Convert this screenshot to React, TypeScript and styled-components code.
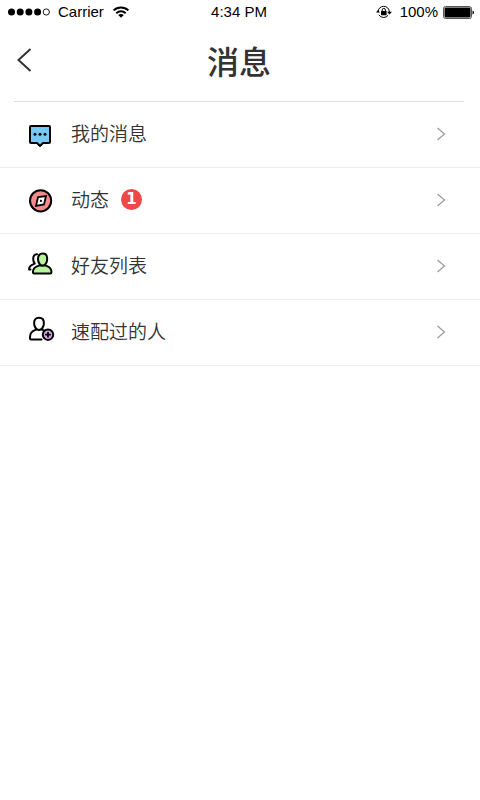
import React from "react";
import styled, { createGlobalStyle } from "styled-components";

const GlobalStyle = createGlobalStyle`
  * { box-sizing: border-box; }
  body {
    margin: 0;
    background: #fff;
    color: #333;
    font-family: "Noto Sans CJK SC", sans-serif;
  }
`;

const Page = styled.div`
  min-height: 100vh;
  background: #fff;
`;

const StatusBar = styled.div`
  display: grid;
  grid-template-columns: 1fr auto 1fr;
  align-items: center;
  height: 24px;
  padding: 0 6px 0 8px;
  color: #000;
  font: 15px/24px "Liberation Sans", Arial, sans-serif;
`;

const StatusGroup = styled.div<{ $end?: boolean }>`
  display: flex;
  align-items: center;
  gap: 8px;
  justify-content: ${(p) => (p.$end ? "flex-end" : "flex-start")};
`;

const Clock = styled.time`
  padding-right: 4px;
`;

const Power = styled.span`
  display: flex;
  align-items: center;
  gap: 5px;
`;

const Header = styled.header`
  display: grid;
  grid-template-columns: 48px 1fr 48px;
  align-items: center;
  height: 78px;
  margin: 0 16px 0 14px;
  padding-bottom: 5px;
  border-bottom: 1px solid #dcdcdc;
`;

const BackButton = styled.button`
  display: flex;
  align-items: center;
  height: 48px;
  padding: 0 0 0 2px;
  border: 0;
  background: none;
  cursor: pointer;
`;

const Title = styled.h1`
  margin: 0;
  color: #333;
  font-size: 32px;
  font-weight: 500;
  line-height: 48px;
  text-align: center;
`;

const List = styled.ul`
  margin: 0;
  padding: 0;
  list-style: none;
`;

const Row = styled.li`
  border-bottom: 1px solid #ededed;
`;

const RowLink = styled.a`
  display: flex;
  align-items: center;
  height: 65px;
  padding: 0 34px 2px 26px;
  color: #333;
  text-decoration: none;
`;

const Label = styled.span`
  margin-left: 15px;
  padding-bottom: 2px;
  font-size: 19px;
  font-weight: 350;
  line-height: 28px;
`;

const Badge = styled.span`
  width: 21px;
  height: 21px;
  margin-left: 12px;
  border-radius: 50%;
  background: #f04848;
  color: #fff;
  font: 700 15px/21px "DejaVu Sans", sans-serif;
  text-align: center;
`;

const Chevron = styled.svg`
  margin-left: auto;
`;

const IconFrame = styled.svg`
  flex: none;
  fill: none;
  stroke: #000;
  stroke-width: 2;
  stroke-linecap: round;
  stroke-linejoin: round;
`;

function RowIcon({ children }: { children: React.ReactNode }) {
  return (
    <IconFrame width="30" height="32" viewBox="0 0 30 32" aria-hidden="true">
      {children}
    </IconFrame>
  );
}

const messageIcon = (
  <RowIcon>
    <path d="M5 8H23Q24 8 24 9V24Q24 25 23 25H17L14 28L11 25H5Q4 25 4 24V9Q4 8 5 8Z" fill="#78c8f5" />
    <g fill="#000" stroke="none">
      <circle cx="9" cy="16.3" r="1.5" />
      <circle cx="14" cy="16.3" r="1.5" />
      <circle cx="19" cy="16.3" r="1.5" />
    </g>
  </RowIcon>
);

const compassIcon = (
  <RowIcon>
    <circle cx="14.6" cy="16.8" r="10.6" fill="#f38b8b" />
    <path d="M12 13.2L20 12L18 20.4L10 21.8Z" fill="#fff" strokeWidth="1.8" strokeLinejoin="miter" />
    <circle cx="14.9" cy="16.9" r="1.1" fill="#000" stroke="none" />
  </RowIcon>
);

const friendsIcon = (
  <RowIcon>
    <path d="M11 4.2C8.6 4 7.2 6 7.2 8.8C7.2 10.8 7.7 12.4 8.8 13.6C5.2 14.8 3 16 3 19.4H4.5" />
    <path d="M12.8 15.6C9 16.8 7 18 7 21.6V22.6Q7 23.6 8 23.6H24.4Q25.4 23.6 25.4 22.6V21.6C25.4 18 23.4 16.8 20 15.6Z" fill="#b6f59a" />
    <path d="M16.6 3.6C19.6 3.6 21.2 5.6 21.2 8.8C21.2 12.6 19.2 15.6 16.6 15.6C14 15.6 12 12.6 12 8.8C12 5.6 13.6 3.6 16.6 3.6Z" fill="#b6f59a" />
  </RowIcon>
);

const matchIcon = (
  <RowIcon>
    <path d="M13 1.7C16.2 1.7 17.9 3.8 17.9 7C17.9 10.8 15.8 14 13 14C10.2 14 8.1 10.8 8.1 7C8.1 3.8 9.8 1.7 13 1.7Z" />
    <path d="M10 13.6C6 15.4 4 16.8 4 21.4V22.4Q4 23.4 5 23.4H15.5M16 13.6L18.4 14.6" />
    <circle cx="22" cy="18.7" r="5.2" fill="#d8a4e8" />
    <path d="M22 16.6V20.8M19.9 18.7H24.1" strokeWidth="1.8" />
  </RowIcon>
);

const items = [
  { label: "我的消息", icon: messageIcon },
  { label: "动态", icon: compassIcon, count: 1 },
  { label: "好友列表", icon: friendsIcon },
  { label: "速配过的人", icon: matchIcon },
];

function Signal() {
  return (
    <svg width="42" height="10" viewBox="0 0 42 10" role="img" aria-label="Signal strength">
      <circle cx="3.5" cy="5" r="3.5" />
      <circle cx="12.2" cy="5" r="3.5" />
      <circle cx="20.9" cy="5" r="3.5" />
      <circle cx="29.6" cy="5" r="3.5" />
      <circle cx="38.3" cy="5" r="3.1" fill="none" stroke="#000" strokeWidth="0.9" />
    </svg>
  );
}

function Wifi() {
  return (
    <svg width="18" height="12" viewBox="0 0 18 12" role="img" aria-label="Wi-Fi">
      <g fill="none" stroke="#000" strokeWidth="2">
        <path d="M1.6 4.4C5.8 0.4 12.2 0.4 16.4 4.4" />
        <path d="M4.3 7.2C7 4.7 11 4.7 13.7 7.2" />
      </g>
      <path d="M6.2 9C7.8 7.6 10.2 7.6 11.8 9L9 11.8Z" />
    </svg>
  );
}

function RotationLock() {
  return (
    <svg width="16" height="14" viewBox="0 0 16 14" role="img" aria-label="Rotation lock">
      <path d="M2 7A5.7 5.7 0 0 1 13.4 7M12.2 10.2A5.7 5.7 0 0 1 2.8 9.8" fill="none" stroke="#000" />
      <path d="M11 6.8H16L13.5 9.6ZM0 7.4H4L2 5Z" />
      <rect x="5" y="6" width="5.6" height="4.2" rx="0.5" />
      <path d="M6.2 6V5A1.6 1.6 0 0 1 9.4 5V6" fill="none" stroke="#000" />
    </svg>
  );
}

function Battery() {
  return (
    <svg width="31" height="13" viewBox="0 0 31 13" role="img" aria-label="Battery">
      <rect x="0.5" y="0.5" width="28" height="12" rx="2" fill="#fff" stroke="#555" />
      <rect x="1.5" y="1.5" width="26" height="10" rx="1" />
      <path d="M29.5 4.5Q31 5 31 6.5Q31 8 29.5 8.5Z" />
    </svg>
  );
}

export default function App() {
  return (
    <Page>
      <GlobalStyle />
      <StatusBar>
        <StatusGroup>
          <Signal />
          <span>Carrier</span>
          <Wifi />
        </StatusGroup>
        <Clock>4:34 PM</Clock>
        <StatusGroup $end>
          <RotationLock />
          <Power>
            100%
            <Battery />
          </Power>
        </StatusGroup>
      </StatusBar>
      <Header>
        <BackButton type="button" aria-label="返回">
          <svg width="16" height="24" viewBox="0 0 16 24" fill="none" stroke="#333" strokeWidth="2">
            <path d="M14.5 1L2.5 12L14.5 23" />
          </svg>
        </BackButton>
        <Title>消息</Title>
      </Header>
      <List>
        {items.map((item) => (
          <Row key={item.label}>
            <RowLink href="#">
              {item.icon}
              <Label>{item.label}</Label>
              {item.count && <Badge>{item.count}</Badge>}
              <Chevron width="10" height="14" viewBox="0 0 10 14" fill="none" stroke="#999" strokeWidth="1.2" aria-hidden="true">
                <path d="M1.5 1L8.5 7L1.5 13" />
              </Chevron>
            </RowLink>
          </Row>
        ))}
      </List>
    </Page>
  );
}
